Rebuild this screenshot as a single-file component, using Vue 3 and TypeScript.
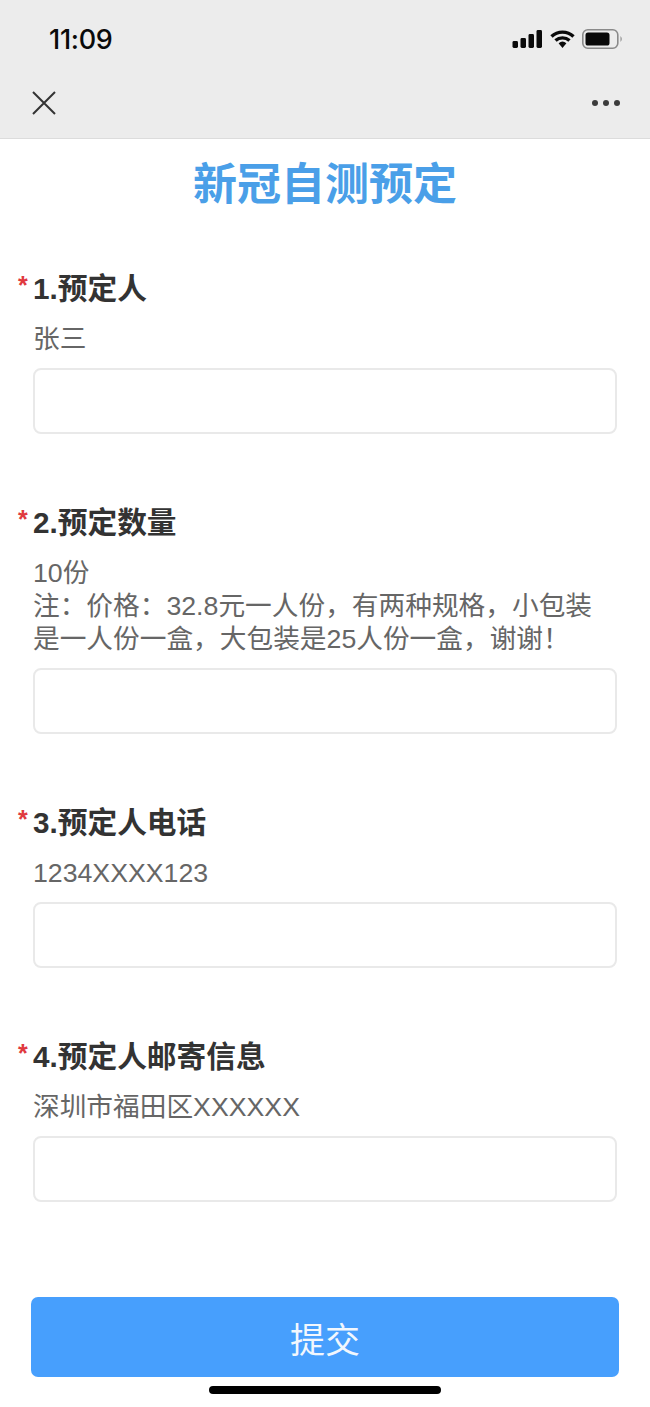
<script setup lang="ts">
interface Field {
  title: string
  lines: string[]
}

const fields: Field[] = [
  { title: '1.预定人', lines: ['张三'] },
  {
    title: '2.预定数量',
    lines: ['10份', '注：价格：32.8元一人份，有两种规格，小包装', '是一人份一盒，大包装是25人份一盒，谢谢！'],
  },
  { title: '3.预定人电话', lines: ['1234XXXX123'] },
  { title: '4.预定人邮寄信息', lines: ['深圳市福田区XXXXXX'] },
]
</script>

<template>
  <div class="page">
    <header class="top">
      <div class="status">
        <span class="time">11:09</span>
        <div class="status-icons">
          <svg width="31" height="18" viewBox="0 0 30 18" class="signal">
            <rect x="0" y="11" width="5.5" height="7" rx="1.4" />
            <rect x="8" y="8" width="5.5" height="10" rx="1.4" />
            <rect x="16" y="4" width="5.5" height="14" rx="1.4" />
            <rect x="24" y="0" width="5.5" height="18" rx="1.4" />
          </svg>
          <svg width="25" height="19" viewBox="0 0 25 19" class="wifi">
            <path d="M1.5 6.5 A16 16 0 0 1 23.5 6.5" />
            <path d="M5.5 10.5 A10.5 10.5 0 0 1 19.5 10.5" />
            <path class="wifi-dot" d="M8.6 13.2 A6 6 0 0 1 16.4 13.2 L12.5 18 Z" />
          </svg>
          <svg width="41" height="20" viewBox="0 0 41 20" class="battery">
            <rect class="batt-shell" x="0.8" y="0.8" width="35" height="18.4" rx="5" />
            <rect x="3.5" y="3.5" width="24" height="13" rx="2.6" />
            <path class="batt-cap" d="M38.5 7 Q41 10 38.5 13 Z" />
          </svg>
        </div>
      </div>
      <div class="nav">
        <svg width="26" height="26" viewBox="0 0 26 26" class="close">
          <path d="M2 2 L24 24 M24 2 L2 24" />
        </svg>
        <div class="more"><i></i><i></i><i></i></div>
      </div>
    </header>

    <main class="body">
      <h1 class="title">新冠自测预定</h1>
      <section v-for="f in fields" :key="f.title" class="field">
        <h2 class="label"><span class="star">*</span>{{ f.title }}</h2>
        <p class="desc">
          <span v-for="l in f.lines" :key="l" class="line">{{ l }}</span>
        </p>
        <div class="input"></div>
      </section>
    </main>

    <div class="submit">提交</div>
    <div class="home"></div>
  </div>
</template>

<style>
html, body { margin: 0; background: #fff; }
</style>

<style scoped>
.page {
  width: 650px;
  height: 1407px;
  overflow: hidden;
  background: #fff;
  display: flex;
  flex-direction: column;
  font-family: "Liberation Sans", "Noto Sans CJK SC", sans-serif;
}
.top {
  height: 138px;
  flex: none;
  background: #ececec;
  border-bottom: 1px solid #dcdcdc;
  box-sizing: content-box;
}
.status {
  height: 78px;
  padding: 0 27px 0 49px;
  display: flex;
  align-items: center;
  justify-content: space-between;
}
.time {
  font-family: Inter, "Liberation Sans", sans-serif;
  font-size: 27px;
  font-weight: 500;
  color: #0a0a0a;
  letter-spacing: -0.3px;
}
.status-icons { display: flex; align-items: center; gap: 7px; }
.signal rect, .battery rect { fill: #0a0a0a; }
.wifi path { fill: none; stroke: #0a0a0a; stroke-width: 3.4; }
.wifi .wifi-dot { fill: #0a0a0a; stroke: none; }
.battery .batt-shell { fill: none; stroke: #8a8a8a; stroke-width: 1.6; }
.batt-cap { fill: #8a8a8a; }
.nav {
  height: 50px;
  padding: 0 30px 0 31px;
  display: flex;
  align-items: center;
  justify-content: space-between;
}
.close path { fill: none; stroke: #333; stroke-width: 2; }
.more { display: flex; gap: 5px; }
.more i { width: 6px; height: 6px; border-radius: 50%; background: #3c3c3c; }
.body { padding: 0 33px; flex: 1; }
.title {
  margin: 22px 0 0;
  height: 48px;
  line-height: 48px;
  text-align: center;
  font-size: 44px;
  font-weight: 700;
  color: #4a9fe8;
}
.field { margin-top: 70px; }
.title + .field { margin-top: 61px; }
.label {
  position: relative;
  margin: 0;
  font-size: 29.7px;
  line-height: 37px;
  font-weight: 700;
  color: #333;
}
.star {
  position: absolute;
  left: -15px;
  top: -3px;
  font-size: 25px;
  font-weight: 700;
  color: #e0393e;
}
.desc {
  margin: 16px 0 0;
  font-size: 26.7px;
  line-height: 33px;
  color: #666;
}
.line { display: block; white-space: nowrap; }
.input {
  margin-top: 12px;
  height: 66px;
  box-sizing: border-box;
  width: 584px;
  border: 2px solid #e9e9e9;
  border-radius: 8px;
  background: #fff;
}
.submit {
  flex: none;
  margin: 0 31px;
  height: 80px;
  background: #479ffd;
  border-radius: 7px;
  color: #f2f7fd;
  font-size: 35px;
  display: flex;
  align-items: center;
  justify-content: center;
}
.home {
  flex: none;
  align-self: center;
  width: 232px;
  height: 8px;
  margin: 9px 0 13px;
  border-radius: 4px;
  background: #000;
}
</style>
